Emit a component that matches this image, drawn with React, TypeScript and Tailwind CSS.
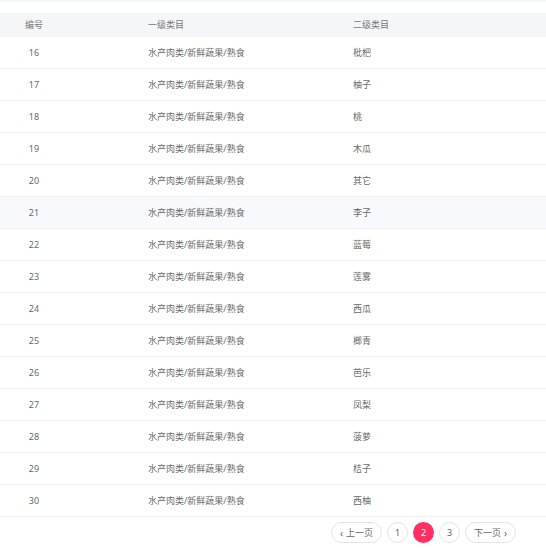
const rows = [
  { id: 16, sub: "枇杷" },
  { id: 17, sub: "柚子" },
  { id: 18, sub: "桃" },
  { id: 19, sub: "木瓜" },
  { id: 20, sub: "其它" },
  { id: 21, sub: "李子" },
  { id: 22, sub: "蓝莓" },
  { id: 23, sub: "莲雾" },
  { id: 24, sub: "西瓜" },
  { id: 25, sub: "榔青" },
  { id: 26, sub: "芭乐" },
  { id: 27, sub: "凤梨" },
  { id: 28, sub: "菠萝" },
  { id: 29, sub: "桔子" },
  { id: 30, sub: "西柚" },
];

const font = { fontFamily: '"Noto Sans", "Noto Sans CJK SC", sans-serif' };

function PageButton({ children, active }: { children: React.ReactNode; active?: boolean }) {
  return (
    <button
      className={
        active
          ? "h-[21px] w-[21px] rounded-full bg-[#ff2e63] text-white text-[9px] flex items-center justify-center"
          : "h-[21px] w-[21px] rounded-full border border-[#e3e3e3] bg-white text-[#666] text-[9px] flex items-center justify-center"
      }
    >
      {children}
    </button>
  );
}

export default function App() {
  return (
    <div className="w-[546px] h-[550px] bg-white overflow-hidden" style={font}>
      <div className="h-[2px] bg-[#f5f6f8]" />
      <div className="mt-[11px]">
        <div className="grid grid-cols-[148px_205px_1fr] h-[24px] items-center bg-[#f5f6f8] text-[9px] text-[#777]">
          <div className="w-[68px] text-center">编号</div>
          <div>一级类目</div>
          <div>二级类目</div>
        </div>
        {rows.map((r) => (
          <div
            key={r.id}
            className={
              "grid grid-cols-[148px_205px_1fr] h-[32px] items-center border-b border-[#f0f1f3] text-[9px] text-[#6a6a6a] " +
              (r.id === 21 ? "bg-[#f7f9fc]" : "bg-white")
            }
          >
            <div className="w-[68px] text-center">{r.id}</div>
            <div>水产肉类/新鲜蔬果/熟食</div>
            <div>{r.sub}</div>
          </div>
        ))}
      </div>
      <div className="flex justify-end items-center gap-[5px] pr-[30px] mt-[5px]">
        <button className="h-[21px] w-[51px] rounded-full border border-[#e3e3e3] bg-white text-[#666] text-[9px] flex items-center justify-center gap-[3px]">
          <span className="text-[10px] leading-none">‹</span>
          <span>上一页</span>
        </button>
        <PageButton>1</PageButton>
        <PageButton active>2</PageButton>
        <PageButton>3</PageButton>
        <button className="h-[21px] w-[51px] rounded-full border border-[#e3e3e3] bg-white text-[#666] text-[9px] flex items-center justify-center gap-[3px]">
          <span>下一页</span>
          <span className="text-[10px] leading-none">›</span>
        </button>
      </div>
    </div>
  );
}
